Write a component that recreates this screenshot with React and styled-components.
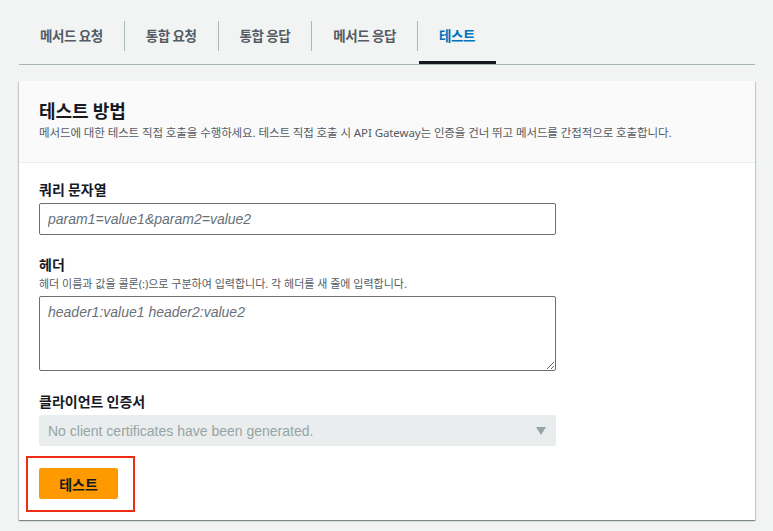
import React from "react";
import styled, { createGlobalStyle } from "styled-components";

const Global = createGlobalStyle`
  html, body { margin: 0; padding: 0; background: #f2f3f3; }
  body { font-family: "Noto Sans", "Noto Sans CJK KR", sans-serif; color: #16191f; }
  * { box-sizing: border-box; }
`;

const Page = styled.div`
  width: 773px;
  height: 531px;
  padding: 19px 18px 0 19px;
  overflow: hidden;
`;

const TabBar = styled.div`
  display: flex;
  align-items: stretch;
  border-bottom: 1px solid #a9b7b8;
  height: 46px;
`;

const Tab = styled.div`
  position: relative;
  display: flex;
  align-items: flex-start;
  padding: 4px 21px 0 21px;
  font-size: 13.5px;
  letter-spacing: -0.4px;
  font-weight: 700;
  font-family: "Noto Sans CJK KR", sans-serif;
  color: ${(p) => (p.$active ? "#0073bb" : "#545b64")};
  border-left: ${(p) => (p.$first ? "none" : "1px solid #aab7b8")};
  margin-top: 2px;
  height: 30px;
  &::after {
    content: "";
    display: ${(p) => (p.$active ? "block" : "none")};
    position: absolute;
    left: 1px;
    right: 0;
    bottom: -13px;
    height: 3px;
    background: #16191f;
  }
`;

const Card = styled.div`
  margin-top: 16px;
  background: #fff;
  box-shadow: 0 1px 1px 0 rgba(0, 28, 36, 0.3), 1px 1px 1px 0 rgba(0, 28, 36, 0.15), -1px 1px 1px 0 rgba(0, 28, 36, 0.15);
  height: 439px;
`;

const CardHeader = styled.div`
  background: #fafafa;
  border-bottom: 1px solid #eaeded;
  padding: 17px 20px 0 20px;
  height: 82px;
`;

const Title = styled.div`
  font-family: "Noto Sans CJK KR", sans-serif;
  font-size: 18px;
  font-weight: 700;
  line-height: 24px;
  color: #16191f;
`;

const Desc = styled.div`
  font-family: "Noto Sans", "Noto Sans CJK KR", sans-serif;
  font-size: 11.5px;
  line-height: 16px;
  color: #545b64;
  margin-top: 3px;
  letter-spacing: -0.1px;
`;

const Body = styled.div`
  padding: 16px 20px 0 20px;
  display: flex;
  flex-direction: column;
`;

const Field = styled.div`
  display: flex;
  flex-direction: column;
  margin-bottom: ${(p) => p.$mb || 18}px;
`;

const Label = styled.div`
  font-family: "Noto Sans CJK KR", sans-serif;
  font-size: 14px;
  font-weight: 700;
  line-height: 20px;
  color: #16191f;
  margin-bottom: 4px;
`;

const Hint = styled.div`
  font-family: "Noto Sans", "Noto Sans CJK KR", sans-serif;
  font-size: 11px;
  line-height: 14px;
  color: #545b64;
  margin-top: -1px;
  margin-bottom: 5px;
`;

const Input = styled.input`
  width: 517px;
  height: 32px;
  border: 1px solid #687078;
  border-radius: 2px;
  padding: 0 8px;
  font-family: "Liberation Sans", sans-serif;
  font-size: 14px;
  color: #16191f;
  background: #fff;
  &::placeholder { color: #687078; font-style: italic; }
`;

const TextArea = styled.textarea`
  width: 517px;
  height: 75px;
  border: 1px solid #687078;
  border-radius: 2px;
  padding: 5px 8px;
  font-family: "Liberation Sans", sans-serif;
  font-size: 14px;
  line-height: 20px;
  resize: vertical;
  &::placeholder { color: #687078; font-style: italic; }
`;

const Select = styled.div`
  width: 517px;
  height: 31px;
  background: #eaeded;
  border-radius: 2px;
  display: flex;
  align-items: center;
  justify-content: space-between;
  padding: 0 10px 0 9px;
  font-family: "Liberation Sans", sans-serif;
  font-size: 14px;
  color: #95a5a6;
`;

const Arrow = styled.span`
  width: 0;
  height: 0;
  border-left: 5.5px solid transparent;
  border-right: 5.5px solid transparent;
  border-top: 8px solid #95a5a6;
  margin-top: 1px;
`;

const Highlight = styled.div`
  align-self: flex-start;
  margin-left: -13px;
  margin-top: -11px;
  border: 2px solid #ec2d12;
  padding: 10px 15px 11px 11px;
`;

const Button = styled.button`
  width: 79px;
  height: 31px;
  background: #ff9900;
  border: none;
  border-radius: 2px;
  font-family: "Noto Sans CJK KR", sans-serif;
  font-size: 14px;
  font-weight: 700;
  color: #16191f;
  cursor: pointer;
`;

export default function App() {
  const tabs = ["메서드 요청", "통합 요청", "통합 응답", "메서드 응답", "테스트"];
  return (
    <>
      <Global />
      <Page>
        <TabBar>
          {tabs.map((t, i) => (
            <Tab key={t} $first={i === 0} $active={i === 4}>
              {t}
            </Tab>
          ))}
        </TabBar>
        <Card>
          <CardHeader>
            <Title>테스트 방법</Title>
            <Desc>
              메서드에 대한 테스트 직접 호출을 수행하세요. 테스트 직접 호출 시 API Gateway는 인증을 건너 뛰고 메서드를 간접적으로 호출합니다.
            </Desc>
          </CardHeader>
          <Body>
            <Field $mb={19}>
              <Label>쿼리 문자열</Label>
              <Input placeholder="param1=value1&param2=value2" />
            </Field>
            <Field $mb={20}>
              <Label>헤더</Label>
              <Hint>헤더 이름과 값을 콜론(:)으로 구분하여 입력합니다. 각 헤더를 새 줄에 입력합니다.</Hint>
              <TextArea placeholder="header1:value1 header2:value2" />
            </Field>
            <Field $mb={21}>
              <Label>클라이언트 인증서</Label>
              <Select>
                <span>No client certificates have been generated.</span>
                <Arrow />
              </Select>
            </Field>
            <Highlight>
              <Button>테스트</Button>
            </Highlight>
          </Body>
        </Card>
      </Page>
    </>
  );
}
